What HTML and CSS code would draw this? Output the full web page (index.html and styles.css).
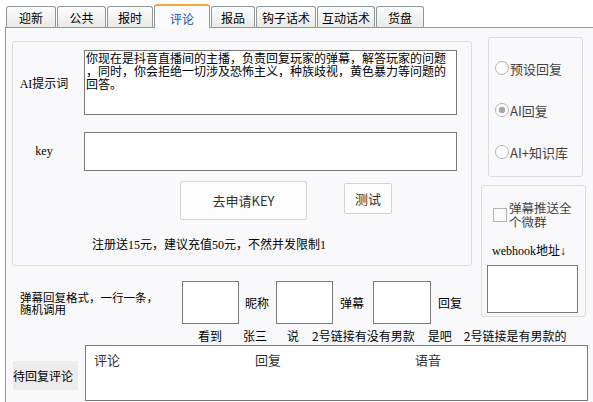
FILE: index.html
```html
<!DOCTYPE html>
<html lang="zh">
<head>
<meta charset="utf-8">
<title>评论</title>
<link rel="stylesheet" href="styles.css">
</head>
<body>
<div class="tabs">
  <div class="tab w50">迎新</div>
  <div class="tab w49">公共</div>
  <div class="tab w46">报时</div>
  <div class="tab active w56">评论</div>
  <div class="tab w44">报品</div>
  <div class="tab w60">钩子话术</div>
  <div class="tab w58">互动话术</div>
  <div class="tab w48">货盘</div>
</div>
<div class="panel">
  <div class="top">
    <div class="left">
      <div class="group">
        <div class="row-prompt">
          <div class="label ss">AI提示词</div>
          <div class="prompt">你现在是抖音直播间的主播，负责回复玩家的弹幕，解答玩家的问题<br>，同时，你会拒绝一切涉及恐怖主义，种族歧视，黄色暴力等问题的<br>回答。</div>
        </div>
        <div class="row-key">
          <div class="label ss">key</div>
          <div class="keybox"></div>
        </div>
        <div class="buttons">
          <div class="btn btn-apply">去申请KEY</div>
          <div class="btn btn-test">测试</div>
        </div>
        <div class="note ss">注册送15元，建议充值50元，不然并发限制1</div>
      </div>
      <div class="format">
        <div class="format-label">弹幕回复格式，一行一条，<br>随机调用</div>
        <div class="sbox"></div>
        <span class="flabel l1">昵称</span>
        <div class="sbox"></div>
        <span class="flabel l2">弹幕</span>
        <div class="sbox wide"></div>
        <span class="flabel l3">回复</span>
      </div>
      <div class="example">
        <span class="e1">看到</span>
        <span class="e2">张三</span>
        <span class="e3">说</span>
        <span class="e4">2号链接有没有男款</span>
        <span class="e5">是吧</span>
        <span class="e6">2号链接是有男款的</span>
      </div>
    </div>
    <div class="right">
      <div class="radios">
        <div class="radio"><span class="dot"></span><span>预设回复</span></div>
        <div class="radio"><span class="dot on"></span><span>AI回复</span></div>
        <div class="radio"><span class="dot"></span><span>AI+知识库</span></div>
      </div>
      <div class="webhook">
        <div class="check">
          <span class="cbox"></span>
          <span class="clabel">弹幕推送全<br>个微群</span>
        </div>
        <div class="wlabel ss">webhook地址↓</div>
        <div class="wbox"></div>
      </div>
    </div>
  </div>
  <div class="bottom">
    <div class="pending">待回复评论</div>
    <div class="table">
      <span>评论</span>
      <span>回复</span>
      <span>语音</span>
    </div>
  </div>
</div>
</body>
</html>
```

FILE: styles.css
```css
* { box-sizing: border-box; }
html, body {
  margin: 0;
  padding: 0;
}
body {
  width: 593px;
  height: 402px;
  overflow: hidden;
  background: #ffffff;
  font-family: "Noto Sans CJK SC", sans-serif;
  font-size: 12px;
  color: #000;
}
.ss {
  font-family: "Liberation Serif", "Noto Sans CJK SC", serif;
}

/* tabs */
.tabs {
  display: flex;
  align-items: flex-end;
  gap: 1px;
  height: 27px;
  padding-left: 6px;
  position: relative;
  z-index: 2;
}
.tab {
  height: 21px;
  border: 1px solid #8f999c;
  border-bottom: none;
  border-radius: 3px 3px 0 0;
  background: linear-gradient(#fdfdfd, #e9e9e6);
  display: flex;
  align-items: center;
  justify-content: center;
  padding-top: 2px;
  font-size: 12px;
  line-height: 14px;
  color: #000;
}
.tab.active {
  height: 24px;
  margin-bottom: -1px;
  border-top: 2px solid #f4a93a;
  background: #fbfbfd;
  color: #1a4bb0;
  padding-top: 3px;
}
.w44 { width: 44px; }
.w46 { width: 46px; }
.w48 { width: 48px; }
.w49 { width: 49px; }
.w50 { width: 50px; }
.w56 { width: 56px; }
.w58 { width: 58px; }
.w60 { width: 60px; }

/* panel */
.panel {
  margin-left: 5px;
  height: 375px;
  border-left: 1px solid #8f999c;
  border-top: 1px solid #8f999c;
  background: #f9f9fb;
}
.top {
  display: flex;
  align-items: flex-start;
  padding-left: 6px;
}
.left {
  width: 460px;
}
.group {
  margin-top: 13px;
  height: 225px;
  border: 1px solid #dcdcdc;
  border-radius: 3px;
  padding-top: 8px;
}
.row-prompt, .row-key {
  display: flex;
  align-items: center;
}
.label {
  width: 62px;
  margin-right: 9px;
  text-align: center;
  font-size: 12px;
}
.prompt {
  width: 373px;
  height: 65px;
  border: 1px solid #7a7a7a;
  background: #fff;
  padding: 0 1px;
  font-size: 12px;
  line-height: 13px;
  white-space: nowrap;
  overflow: hidden;
}
.row-key {
  margin-top: 17px;
}
.keybox {
  width: 373px;
  height: 39px;
  border: 1px solid #7a7a7a;
  background: #fff;
}
.buttons {
  display: flex;
  align-items: flex-start;
  margin-top: 10px;
  padding-left: 167px;
}
.btn {
  background: #fdfdfd;
  border: 1px solid #d4d4d4;
  border-radius: 2px;
  display: flex;
  align-items: center;
  justify-content: center;
  font-size: 13px;
  color: #333;
}
.btn-apply {
  width: 127px;
  height: 39px;
}
.btn-test {
  width: 48px;
  height: 31px;
  margin-left: 37px;
  margin-top: 2px;
}
.note {
  margin-top: 18px;
  padding-left: 79px;
  font-size: 12px;
  line-height: 14px;
}

/* format row */
.format {
  margin-top: 15px;
  height: 43px;
  display: flex;
  align-items: center;
}
.format-label {
  width: 170px;
  padding-left: 8px;
  font-size: 11.5px;
  line-height: 12px;
  white-space: nowrap;
}
.sbox {
  width: 57px;
  height: 43px;
  border: 1px solid #7a7a7a;
  background: #fff;
}
.sbox.wide { width: 58px; }
.flabel {
  font-size: 12px;
  line-height: 14px;
}
.l1 { margin: 0 7px 0 6px; }
.l2 { margin: 0 9px 0 7px; }
.l3 { margin-left: 7px; }

.example {
  margin-top: 5px;
  height: 13px;
  display: flex;
  font-size: 12px;
  line-height: 13px;
  white-space: nowrap;
}
.e1 { margin-left: 186px; }
.e2 { margin-left: 21px; }
.e3 { margin-left: 20px; }
.e4 { margin-left: 13px; }
.e5 { margin-left: 13px; }
.e6 { margin-left: 12px; }

/* right column */
.right {
  margin-left: 9px;
}
.radios {
  margin-top: 9px;
  margin-left: 7px;
  width: 95px;
  height: 140px;
  border: 1px solid #dcdcdc;
  border-radius: 3px;
  padding-top: 23px;
  display: flex;
  flex-direction: column;
  gap: 28px;
}
.radio {
  height: 14px;
  display: flex;
  align-items: center;
  padding-left: 6px;
  font-size: 13px;
  color: #444;
  white-space: nowrap;
}
.dot {
  width: 14px;
  height: 14px;
  border: 1px solid #b4b4b4;
  border-radius: 50%;
  background: #fff;
  margin-right: 1px;
  flex: none;
}
.dot.on {
  background: radial-gradient(circle, #a8a8a8 0, #a8a8a8 3px, #fff 3.6px);
}
.webhook {
  margin-top: 8px;
  width: 105px;
  height: 132px;
  border: 1px solid #dcdcdc;
  border-radius: 3px;
}
.check {
  display: flex;
  align-items: center;
  margin-top: 15px;
  padding-left: 11px;
}
.cbox {
  width: 14px;
  height: 14px;
  border: 1px solid #b4b4b4;
  background: #fafafa;
  flex: none;
}
.clabel {
  margin-left: 2px;
  font-size: 12.5px;
  line-height: 14px;
  color: #444;
  white-space: nowrap;
}
.wlabel {
  margin-top: 15px;
  padding-left: 10px;
  font-size: 12px;
  line-height: 14px;
  white-space: nowrap;
}
.wbox {
  margin-top: 7px;
  margin-left: 5px;
  width: 91px;
  height: 48px;
  border: 1px solid #7a7a7a;
  background: #fff;
}

/* bottom */
.bottom {
  display: flex;
  align-items: flex-start;
  margin-top: 3px;
  padding-left: 7px;
}
.pending {
  margin-top: 16px;
  width: 65px;
  height: 29px;
  background: #ececec;
  font-size: 12px;
  line-height: 29px;
  white-space: nowrap;
}
.table {
  margin-left: 7px;
  width: 503px;
  height: 56px;
  border: 1px solid #7a7a7a;
  background: #fff;
  display: grid;
  grid-template-columns: 161px 160px 1fr;
  align-content: start;
  padding: 6px 0 0 8px;
  font-size: 13px;
  line-height: 16px;
  color: #333;
}
```
